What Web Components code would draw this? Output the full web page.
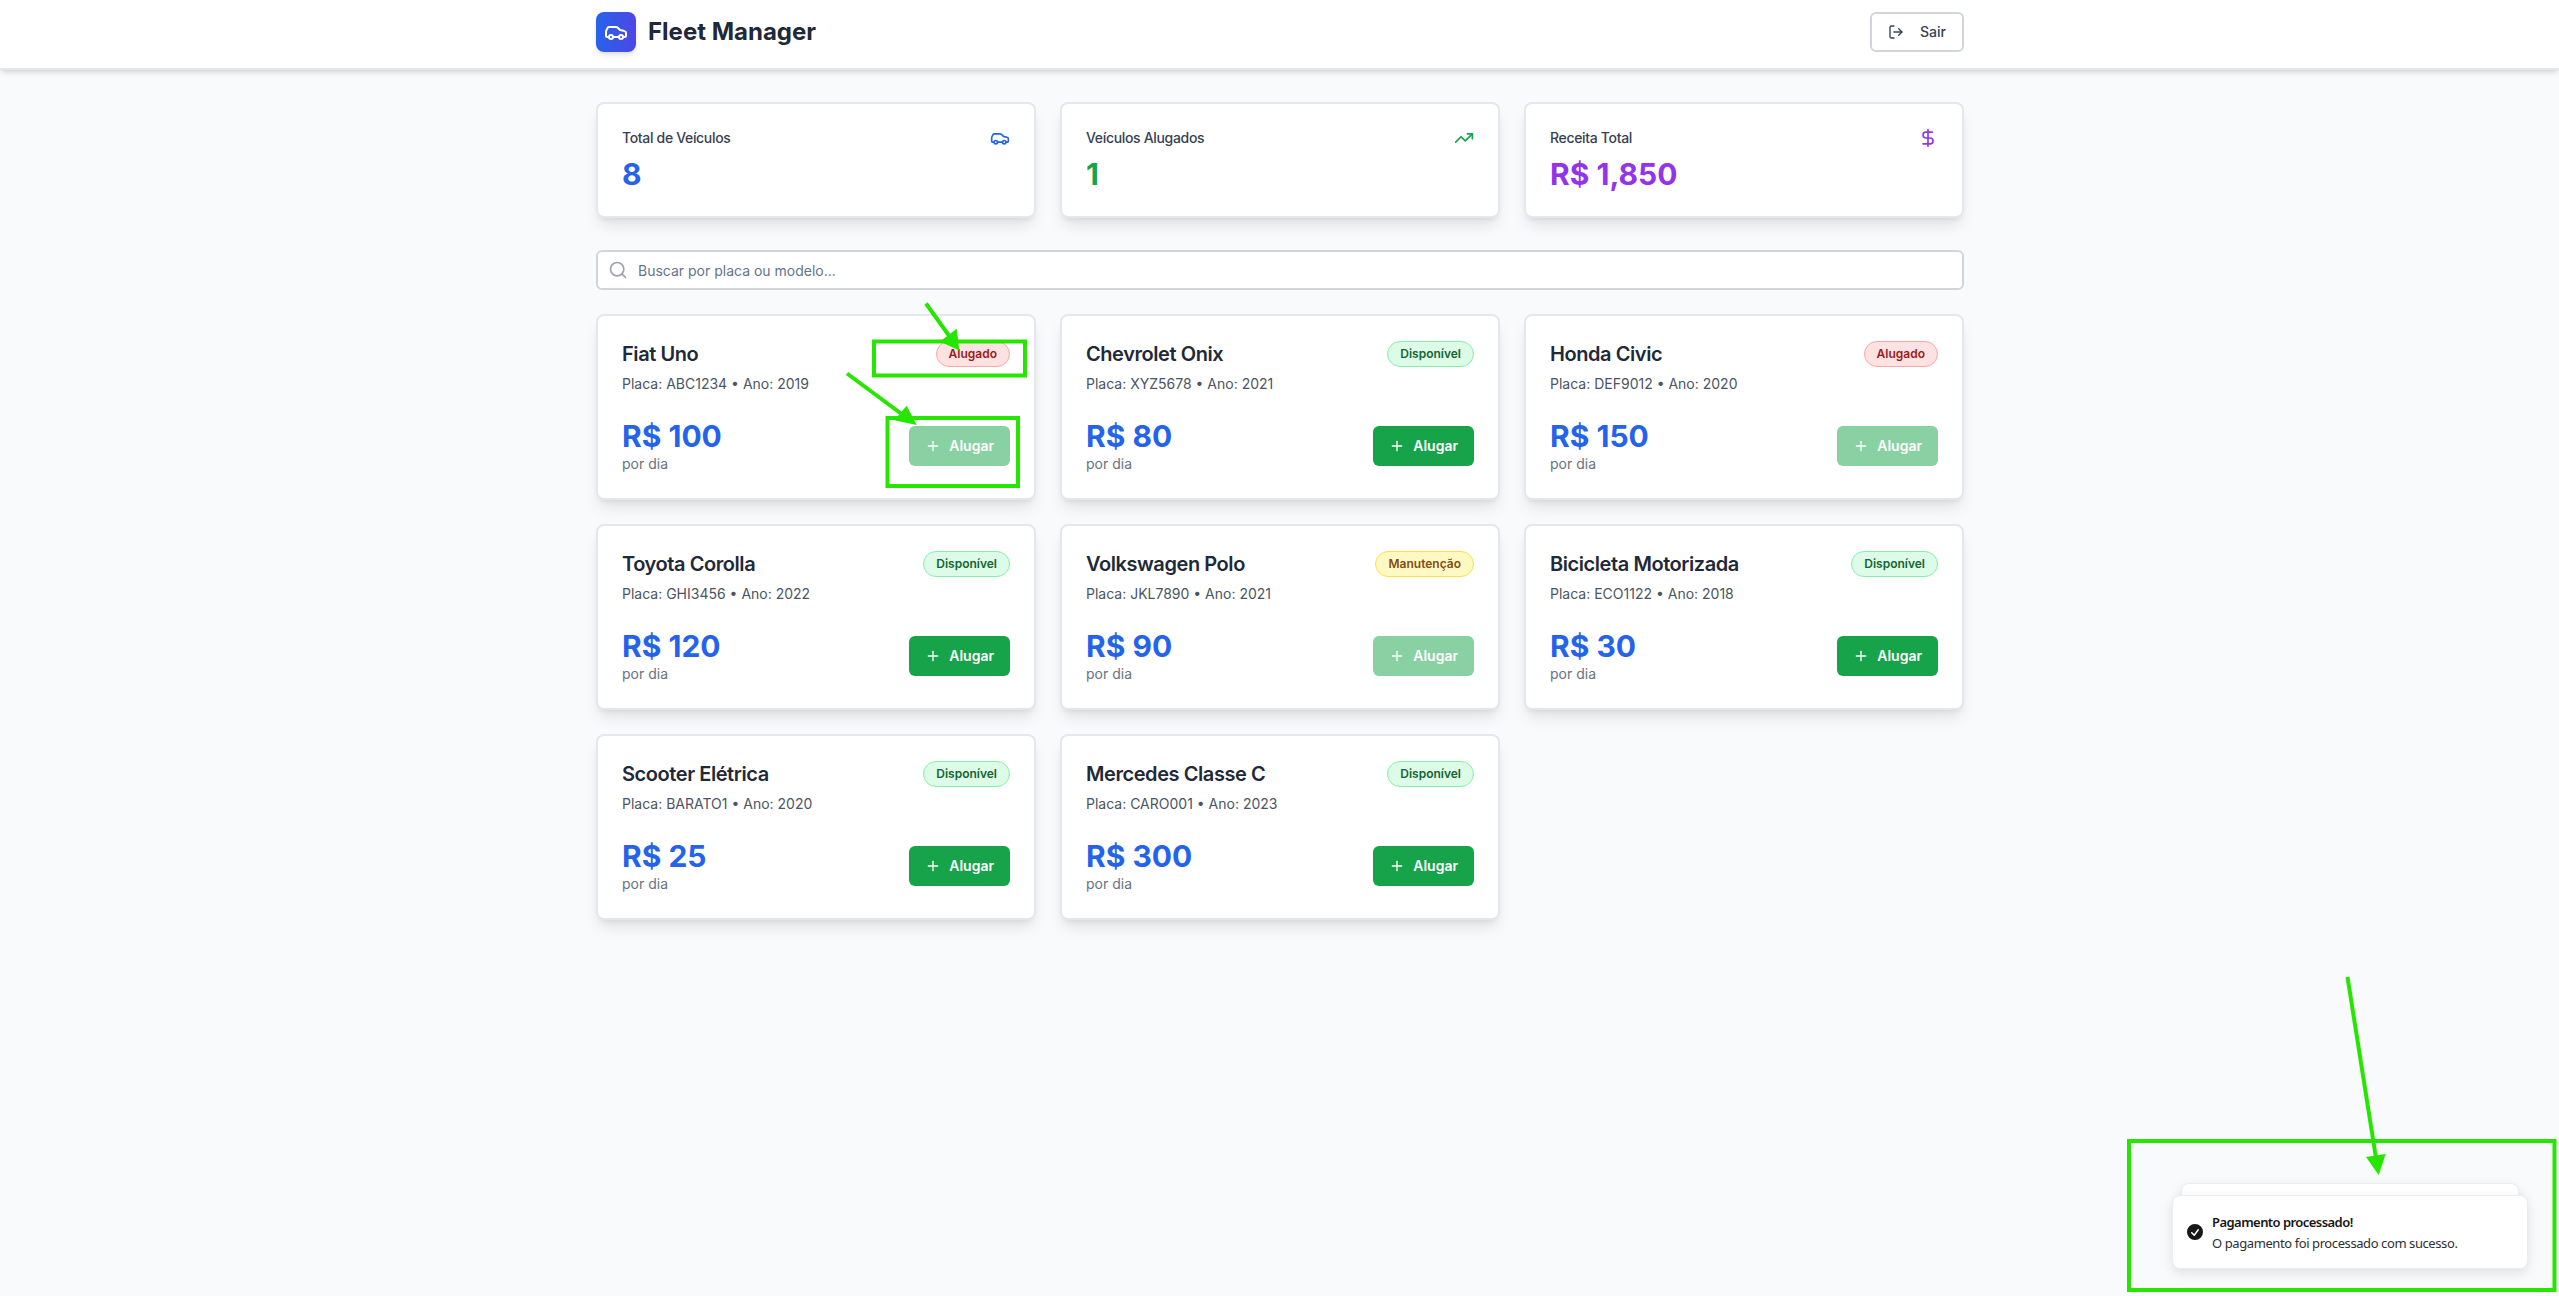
<!DOCTYPE html>
<html lang="pt-BR">
<head>
<meta charset="utf-8">
<title>Fleet Manager</title>
<style>
html,body{margin:0;height:100%}
body{font-family:Inter,"Liberation Sans",sans-serif;font-size:14px;line-height:20px;color:#1f2937;background:#f9fafb;overflow:hidden}
</style>
</head>
<body>
<fleet-app></fleet-app>
<script>
const ICONS = {
  car: '<path d="M19 17h2c.6 0 1-.4 1-1v-3c0-.9-.7-1.7-1.5-1.9C18.7 10.6 16 10 16 10s-1.3-1.4-2.2-2.3c-.5-.4-1.1-.7-1.8-.7H5c-.6 0-1.1.4-1.4.9l-1.4 2.9A3.7 3.7 0 0 0 2 12v4c0 .6.4 1 1 1h2"/><circle cx="7" cy="17" r="2"/><path d="M9 17h6"/><circle cx="17" cy="17" r="2"/>',
  trend: '<polyline points="22 7 13.5 15.5 8.5 10.5 2 17"/><polyline points="16 7 22 7 22 13"/>',
  dollar: '<line x1="12" x2="12" y1="2" y2="22"/><path d="M17 5H9.5a3.5 3.5 0 0 0 0 7h5a3.5 3.5 0 0 1 0 7H6"/>',
  logout: '<path d="M9 21H5a2 2 0 0 1-2-2V5a2 2 0 0 1 2-2h4"/><polyline points="16 17 21 12 16 7"/><line x1="21" x2="9" y1="12" y2="12"/>',
  search: '<circle cx="11" cy="11" r="8"/><path d="m21 21-4.3-4.3"/>',
  plus: '<path d="M5 12h14"/><path d="M12 5v14"/>'
};
const define = (name, render) => customElements.define(name, class extends HTMLElement {
  connectedCallback() {
    if (this.shadowRoot) return;
    this.attachShadow({mode: 'open'}).innerHTML = render(this);
  }
});

define('ui-icon', el => `<style>
:host{display:block;flex:none;width:var(--size,16px);height:var(--size,16px)}
svg{display:block;width:100%;height:100%;fill:none;stroke:currentColor;stroke-width:2;stroke-linecap:round;stroke-linejoin:round}
</style><svg viewBox="0 0 24 24">${ICONS[el.getAttribute('name')]}</svg>`);

define('app-header', () => `<style>
:host{display:block;background:#fff;border-bottom:2px solid #e5e7eb;box-shadow:0 4px 6px -1px rgba(0,0,0,.1),0 2px 4px -2px rgba(0,0,0,.1);position:relative}
.bar{box-sizing:border-box;width:1400px;margin:0 0 0 round(up,calc(50% - 700px),1px);padding:12px 16px 16px;display:flex;justify-content:space-between;align-items:center}
.brand{display:flex;align-items:center;gap:12px}
.logo{--size:24px;width:40px;height:40px;border-radius:8px;display:flex;align-items:center;justify-content:center;color:#fff;background:linear-gradient(to right,#2563eb,#4f46e5);box-shadow:0 4px 6px -1px rgba(0,0,0,.1),0 2px 4px -2px rgba(0,0,0,.1)}
h1{margin:0;font-size:24px;line-height:32px;font-weight:700;color:#1f2937}
button{font:500 14px/20px Inter,sans-serif;color:#374151;background:#fff;border:2px solid #d1d5db;border-radius:6px;height:40px;box-sizing:border-box;padding:0 16px;display:flex;align-items:center;gap:16px}
</style><div class="bar"><div class="brand"><div class="logo"><ui-icon name="car"></ui-icon></div><h1>Fleet Manager</h1></div>
<button><ui-icon name="logout"></ui-icon><span>Sair</span></button></div>`);

define('ui-card', () => `<style>
:host{display:block;box-sizing:border-box;background:#fff;border:2px solid #e5e7eb;border-radius:8px;padding:24px;box-shadow:0 10px 15px -3px rgba(0,0,0,.1),0 4px 6px -4px rgba(0,0,0,.1)}
</style><slot></slot>`);

define('stat-card', el => `<style>
:host{display:block;--size:20px}
.row{display:flex;justify-content:space-between;align-items:center;height:20px;margin-bottom:8px}
.label{font-weight:500;letter-spacing:-.33px;color:#374151}
ui-icon,.value{color:${el.getAttribute('color')}}
.value{font-size:30px;line-height:36px;font-weight:700}
</style><ui-card><div class="row"><span class="label">${el.getAttribute('label')}</span><ui-icon name="${el.getAttribute('icon')}"></ui-icon></div><div class="value"><slot></slot></div></ui-card>`);

define('search-field', el => `<style>
:host{display:flex;align-items:center;gap:10px;box-sizing:border-box;height:40px;padding:0 10px;background:#fff;border:2px solid #d1d5db;border-radius:6px;--size:20px}
ui-icon{color:#9ca3af}
input{flex:1;min-width:0;border:0;outline:0;padding:0;height:20px;background:none;font:14px/20px Inter,sans-serif;margin-top:2px}
input::placeholder{color:#64748b;opacity:1}
</style><ui-icon name="search"></ui-icon><input placeholder="${el.getAttribute('placeholder')}">`);

const STATUS = {
  'Alugado': ['#fee2e2', '#991b1b', '#fca5a5'],
  'Disponível': ['#dcfce7', '#166534', '#86efac'],
  'Manutenção': ['#fef9c3', '#854d0e', '#fde047']
};
define('status-badge', el => {
  const [bg, fg, line] = STATUS[el.getAttribute('status')];
  return `<style>
:host{display:block;flex:none;padding:4px 12px;border-radius:13px;font-size:12px;line-height:16px;font-weight:600;background:${bg};color:${fg};border:1px solid ${line}}
</style>${el.getAttribute('status')}`;
});

define('rent-button', el => `<style>
:host{display:block;flex:none}
button{font:600 14px/20px Inter,sans-serif;color:#fff;background:#16a34a;border:0;border-radius:6px;height:40px;padding:0 16px;display:flex;align-items:center;gap:8px}
button:disabled{opacity:.5}
</style><button ${el.hasAttribute('off') ? 'disabled' : ''}><ui-icon name="plus"></ui-icon><span>Alugar</span></button>`);

define('vehicle-card', el => {
  const a = n => el.getAttribute(n);
  return `<style>
:host{display:block}
.top,.bottom{display:flex;justify-content:space-between;align-items:center}
.top{height:28px}
h3{margin:0;font-size:20px;line-height:28px;font-weight:600;letter-spacing:-.43px;color:#1f2937}
.meta{margin:6px 0 24px;color:#4b5563}
.price{font-size:30px;line-height:36px;font-weight:700;color:#2563eb}
.per{color:#6b7280}
</style><ui-card><div class="top"><h3>${a('model')}</h3><status-badge status="${a('status')}"></status-badge></div>
<div class="meta">Placa: ${a('plate')} • Ano: ${a('year')}</div>
<div class="bottom"><div><div class="price">R$ ${a('price')}</div><div class="per">por dia</div></div><rent-button ${a('status') === 'Disponível' ? '' : 'off'}></rent-button></div></ui-card>`;
});

define('toast-stack', () => `<style>
:host{position:absolute;right:31px;bottom:27px;width:356px;display:block;font-family:"Noto Sans",sans-serif;font-size:13px;color:#171717}
.toast{position:relative;box-sizing:border-box;height:74px;padding:16px;display:flex;align-items:center;gap:6px}
.toast,.back{background:#fff;border:1px solid #ededed;border-radius:8px;box-shadow:0 4px 12px rgba(0,0,0,.1)}
.back{position:absolute;left:9px;right:9px;top:-12px;height:60px;box-sizing:border-box}
svg{width:20px;height:20px;margin:0 0 0 -4px;flex:none}
.t{font-weight:600;line-height:19.5px;letter-spacing:-.55px}
.d{line-height:18.2px;margin-top:2px;color:#2f2f2f;letter-spacing:-.41px}
.copy{margin-left:1px;padding-top:1px}
</style><div class="back"></div><div class="toast"><svg viewBox="0 0 20 20" fill="#171717"><path fill-rule="evenodd" d="M10 18a8 8 0 100-16 8 8 0 000 16zm3.857-9.809a.75.75 0 00-1.214-.882l-3.483 4.79-1.88-1.88a.75.75 0 10-1.06 1.061l2.5 2.5a.75.75 0 001.137-.089l4-5.5z" clip-rule="evenodd"/></svg><div class="copy"><div class="t">Pagamento processado!</div><div class="d">O pagamento foi processado com sucesso.</div></div></div>`);

define('markup-layer', () => `<style>
:host{position:absolute;inset:0;pointer-events:none}
svg{display:block;width:2559px;height:1296px}
</style><svg viewBox="0 0 2559 1296"><g fill="none" stroke="#26e600" stroke-width="4">
<rect x="874" y="341.5" width="151" height="34"/><rect x="887.5" y="418" width="130.5" height="68"/><rect x="2129" y="1141" width="425.5" height="149"/>
<path d="M926 303.5 950 337M847 373.5 903 415M2347.5 977 2376 1158"/></g>
<g fill="#26e600"><path d="M959.3 350.5 956.7 328.7 940 341.5z"/><path d="M916.7 425 906.7 405.7 894.3 420.3z"/><path d="M2378.7 1175 2366 1157 2385.7 1154z"/></g></svg>`);

const FLEET = [
  ['Fiat Uno', 'ABC1234', 2019, 100, 'Alugado'],
  ['Chevrolet Onix', 'XYZ5678', 2021, 80, 'Disponível'],
  ['Honda Civic', 'DEF9012', 2020, 150, 'Alugado'],
  ['Toyota Corolla', 'GHI3456', 2022, 120, 'Disponível'],
  ['Volkswagen Polo', 'JKL7890', 2021, 90, 'Manutenção'],
  ['Bicicleta Motorizada', 'ECO1122', 2018, 30, 'Disponível'],
  ['Scooter Elétrica', 'BARATO1', 2020, 25, 'Disponível'],
  ['Mercedes Classe C', 'CARO001', 2023, 300, 'Disponível']
];
define('fleet-app', () => `<style>
:host{display:block;position:relative;height:1296px;overflow:hidden;background:linear-gradient(to bottom right,#f9fafb,#f8fafc)}
main{box-sizing:border-box;width:1400px;margin:0 0 0 round(up,calc(50% - 700px),1px);padding:32px 16px;display:flex;flex-direction:column}
.grid{display:grid;grid-template-columns:repeat(3,1fr);gap:24px}
search-field{margin:32px 0 24px}
</style><app-header></app-header><main>
<div class="grid"><stat-card label="Total de Veículos" icon="car" color="#2563eb">8</stat-card><stat-card label="Veículos Alugados" icon="trend" color="#16a34a">1</stat-card><stat-card label="Receita Total" icon="dollar" color="#9333ea">R$ 1,850</stat-card></div>
<search-field placeholder="Buscar por placa ou modelo..."></search-field>
<div class="grid">${FLEET.map(([m, p, y, r, s]) => `<vehicle-card model="${m}" plate="${p}" year="${y}" price="${r}" status="${s}"></vehicle-card>`).join('')}</div>
</main><toast-stack></toast-stack><markup-layer></markup-layer>`);
</script>
</body>
</html>
